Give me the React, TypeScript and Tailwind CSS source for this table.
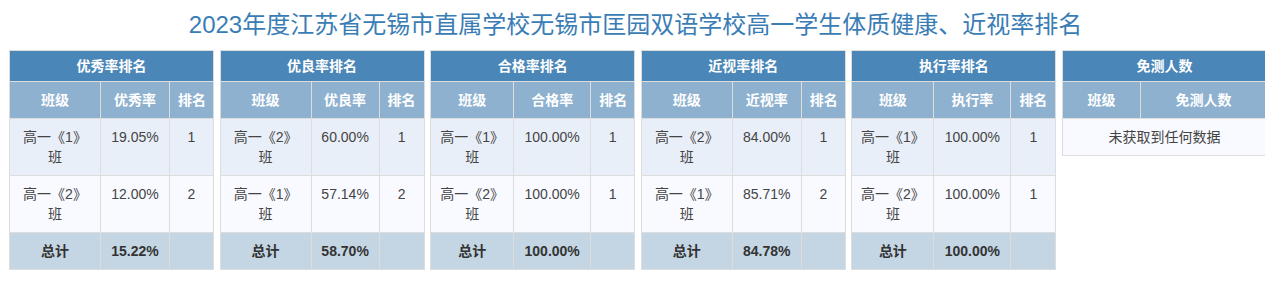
type Row = { name: string; value: string; rank: string };

interface RankTable {
  title: string;
  column: string;
  widths: [string, string, string];
  rows: Row[];
  total: string;
}

const tables: RankTable[] = [
  {
    title: '优秀率排名',
    column: '优秀率',
    widths: ['w-[91px]', 'w-[69px]', 'w-[44px]'],
    rows: [
      { name: '高一《1》班', value: '19.05%', rank: '1' },
      { name: '高一《2》班', value: '12.00%', rank: '2' },
    ],
    total: '15.22%',
  },
  {
    title: '优良率排名',
    column: '优良率',
    widths: ['w-[91px]', 'w-[68px]', 'w-[45px]'],
    rows: [
      { name: '高一《2》班', value: '60.00%', rank: '1' },
      { name: '高一《1》班', value: '57.14%', rank: '2' },
    ],
    total: '58.70%',
  },
  {
    title: '合格率排名',
    column: '合格率',
    widths: ['w-[83px]', 'w-[77px]', 'w-[44px]'],
    rows: [
      { name: '高一《1》班', value: '100.00%', rank: '1' },
      { name: '高一《2》班', value: '100.00%', rank: '1' },
    ],
    total: '100.00%',
  },
  {
    title: '近视率排名',
    column: '近视率',
    widths: ['w-[91px]', 'w-[69px]', 'w-[44px]'],
    rows: [
      { name: '高一《2》班', value: '84.00%', rank: '1' },
      { name: '高一《1》班', value: '85.71%', rank: '2' },
    ],
    total: '84.78%',
  },
  {
    title: '执行率排名',
    column: '执行率',
    widths: ['w-[82px]', 'w-[77px]', 'w-[45px]'],
    rows: [
      { name: '高一《1》班', value: '100.00%', rank: '1' },
      { name: '高一《2》班', value: '100.00%', rank: '1' },
    ],
    total: '100.00%',
  },
];

const cell = 'border border-[#dddddd] px-2 text-center align-top';

function RankingTable({ t }: { t: RankTable }) {
  return (
    <table className="w-[204px] shrink-0 table-fixed border-collapse self-start">
      <colgroup>
        <col className={t.widths[0]} />
        <col className={t.widths[1]} />
        <col className={t.widths[2]} />
      </colgroup>
      <thead>
        <tr>
          <th colSpan={3} className={`${cell} bg-[#4a86b8] py-[5px] font-bold text-white`}>
            {t.title}
          </th>
        </tr>
        <tr className="bg-[#8eb1d0] font-bold text-white">
          <th className={`${cell} py-[8px]`}>班级</th>
          <th className={`${cell} whitespace-nowrap py-[8px]`}>{t.column}</th>
          <th className={`${cell} whitespace-nowrap px-0 py-[8px]`}>排名</th>
        </tr>
      </thead>
      <tbody className="text-[#444]">
        {t.rows.map((r, i) => (
          <tr key={r.name} className={i % 2 === 0 ? 'bg-[#e9eff8]' : 'bg-[#f8faff]'}>
            <td className={`${cell} py-[8px]`}>{r.name}</td>
            <td className={`${cell} whitespace-nowrap px-0 py-[8px]`}>{r.value}</td>
            <td className={`${cell} py-[8px]`}>{r.rank}</td>
          </tr>
        ))}
        <tr className="bg-[#c4d6e4] font-bold text-[#333]">
          <td className={`${cell} py-[8px]`}>总计</td>
          <td className={`${cell} whitespace-nowrap px-0 py-[8px]`}>{t.total}</td>
          <td className={`${cell} py-[8px]`}></td>
        </tr>
      </tbody>
    </table>
  );
}

function ExemptTable() {
  return (
    <table className="w-[204px] shrink-0 table-fixed border-collapse self-start">
      <colgroup>
        <col className="w-[78px]" />
        <col className="w-[126px]" />
      </colgroup>
      <thead>
        <tr>
          <th colSpan={2} className={`${cell} bg-[#4a86b8] py-[5px] font-bold text-white`}>
            免测人数
          </th>
        </tr>
        <tr className="bg-[#8eb1d0] font-bold text-white">
          <th className={`${cell} py-[8px]`}>班级</th>
          <th className={`${cell} py-[8px]`}>免测人数</th>
        </tr>
      </thead>
      <tbody>
        <tr className="bg-[#f8faff] text-[#444]">
          <td colSpan={2} className={`${cell} py-[8px]`}>
            未获取到任何数据
          </td>
        </tr>
      </tbody>
    </table>
  );
}

export default function App() {
  return (
    <div className="h-[282px] w-[1265px] overflow-hidden bg-white font-['Liberation_Sans','Noto_Sans_CJK_SC',sans-serif] text-[14px] leading-[20px]">
      <div className="flex h-[50px] items-center justify-center pl-[6px] text-[24px] leading-[32px] text-[#3a7db5]">
        2023年度江苏省无锡市直属学校无锡市匡园双语学校高一学生体质健康、近视率排名
      </div>
      <div className="ml-[9px] flex gap-[5.6px]">
        {tables.map((t) => (
          <RankingTable key={t.title} t={t} />
        ))}
        <ExemptTable />
      </div>
    </div>
  );
}
